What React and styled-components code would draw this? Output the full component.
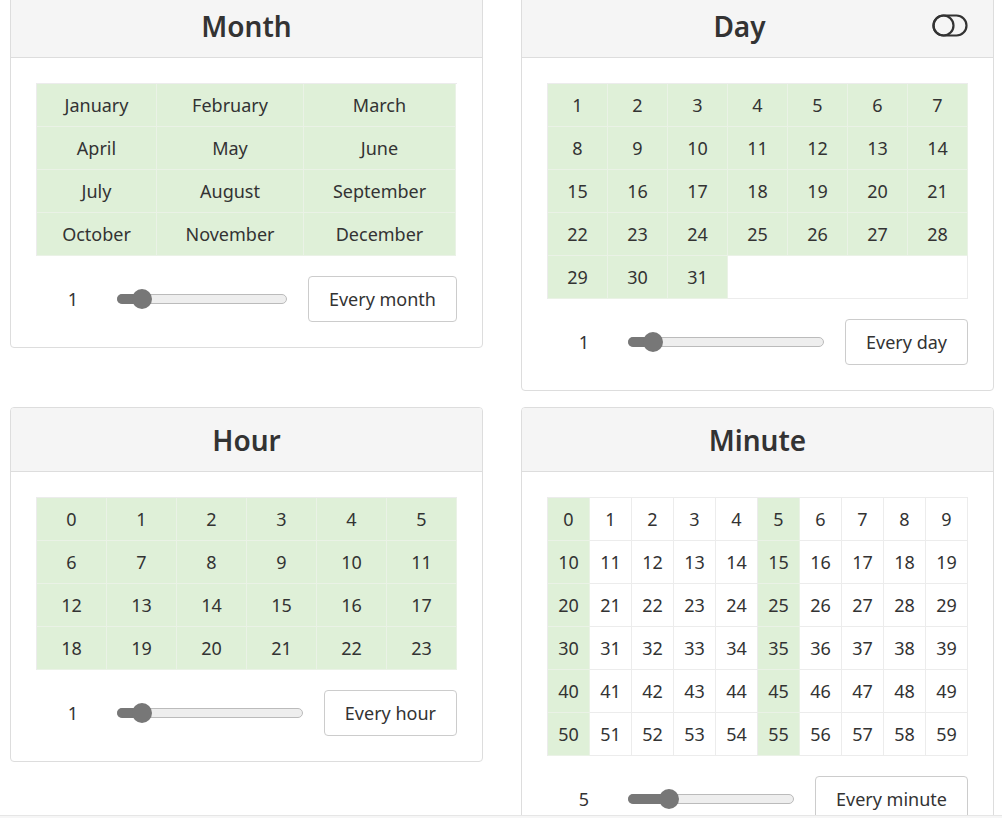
import React from "react";
import styled, { createGlobalStyle } from "styled-components";

const GlobalStyle = createGlobalStyle`
  html, body {
    margin: 0;
    padding: 0;
    background: #fff;
    overflow: hidden;
  }
  body {
    font-family: "Noto Sans", "Open Sans", sans-serif;
    color: #333;
  }
`;

const Viewport = styled.div`
  display: flex;
  flex-direction: column;
  height: 100vh;
`;

const Scroller = styled.div`
  flex: 1;
  overflow: hidden;
`;

const Board = styled.div`
  display: grid;
  grid-template-columns: 473px 473px;
  column-gap: 38px;
  row-gap: 16px;
  align-items: start;
  padding: 0 10px;
  margin-top: -7px;
`;

const StatusStrip = styled.div`
  height: 2px;
  background: #f6f6f6;
  border-top: 1px solid #e6e6e6;
`;

const Card = styled.section`
  border: 1px solid #ddd;
  border-radius: 4px;
  background: #fff;
  overflow: hidden;
`;

const CardHeader = styled.header`
  display: flex;
  align-items: center;
  height: 63px;
  padding: 0 25px;
  background: #f5f5f5;
  border-bottom: 1px solid #ddd;
`;

const Title = styled.h2`
  flex: 1;
  margin: 0;
  text-align: center;
  font-size: 28px;
  font-weight: 600;
  color: #333;
  line-height: 1;
`;

const ToggleButton = styled.span`
  display: flex;
  color: #333;
`;

const CardBody = styled.div`
  padding: 25px;
`;

const CellGrid = styled.div`
  display: grid;
  grid-template-columns: ${(p) => p.$columns};
  border-top: 1px solid #ececec;
  border-left: 1px solid #ececec;
`;

const Cell = styled.div`
  height: 42px;
  display: flex;
  align-items: center;
  justify-content: center;
  font-size: 18px;
  color: #333;
  background: ${(p) => (p.$selected ? "#dff0d8" : "#fff")};
  border-right: 1px solid ${(p) => (p.$selected ? "#eaf2e6" : "#ececec")};
  border-bottom: 1px solid ${(p) => (p.$selected ? "#eaf2e6" : "#ececec")};
`;

const Filler = styled.div`
  grid-column: ${(p) => p.$from} / -1;
  border-right: 1px solid #ececec;
  border-bottom: 1px solid #ececec;
`;

const Controls = styled.div`
  display: flex;
  align-items: center;
  margin-top: 20px;
`;

const StepValue = styled.span`
  width: 74px;
  text-align: center;
  font-size: 18px;
  color: #333;
`;

const Track = styled.div`
  position: relative;
  flex: 1;
  height: 8px;
  margin: 0 21px 0 7px;
  border: 1px solid #bbb;
  border-radius: 6px;
  background: #eee;
`;

const TrackFill = styled.div`
  position: absolute;
  left: -1px;
  top: -1px;
  bottom: -1px;
  background: #777;
  border-radius: 6px 0 0 6px;
`;

const Thumb = styled.div`
  position: absolute;
  top: 50%;
  width: 20px;
  height: 20px;
  margin: -10px 0 0 -10px;
  border-radius: 50%;
  background: #777;
`;

const EveryButton = styled.button`
  height: 46px;
  padding: 0 20px;
  border: 1px solid #ccc;
  border-radius: 4px;
  background: #fff;
  font-family: inherit;
  font-size: 18px;
  color: #333;
  cursor: pointer;
`;

const ToggleIcon = () => (
  <svg width="36" height="23" viewBox="0 0 36 23" fill="none" stroke="currentColor" strokeWidth="2.2">
    <rect x="1.5" y="1.5" width="33" height="20" rx="10" />
    <circle cx="11.5" cy="11.5" r="10" />
  </svg>
);

const range = (from, to) => Array.from({ length: to - from + 1 }, (_, i) => from + i);

const months = [
  "January", "February", "March",
  "April", "May", "June",
  "July", "August", "September",
  "October", "November", "December",
];

const panels = [
  {
    title: "Month",
    columns: "120px 147px 152px",
    cells: months.map((m) => ({ label: m, selected: true })),
    step: 1,
    button: "Every month",
  },
  {
    title: "Day",
    toggle: true,
    columns: "repeat(7, 1fr)",
    perRow: 7,
    cells: range(1, 31).map((d) => ({ label: d, selected: true })),
    step: 1,
    button: "Every day",
  },
  {
    title: "Hour",
    columns: "repeat(6, 1fr)",
    cells: range(0, 23).map((h) => ({ label: h, selected: true })),
    step: 1,
    button: "Every hour",
  },
  {
    title: "Minute",
    columns: "repeat(10, 1fr)",
    cells: range(0, 59).map((m) => ({ label: m, selected: m % 5 === 0 })),
    step: 5,
    button: "Every minute",
  },
];

const StepSlider = ({ step }) => {
  const pos = 20 + step * 4;
  return (
    <Track>
      <TrackFill style={{ width: pos + 1 }} />
      <Thumb style={{ left: pos }} />
    </Track>
  );
};

const Panel = ({ panel }) => {
  const { title, toggle, columns, perRow, cells, step, button } = panel;
  const leftover = perRow ? cells.length % perRow : 0;
  return (
    <Card>
      <CardHeader>
        <Title>{title}</Title>
        {toggle && (
          <ToggleButton>
            <ToggleIcon />
          </ToggleButton>
        )}
      </CardHeader>
      <CardBody>
        <CellGrid $columns={columns}>
          {cells.map((c) => (
            <Cell key={c.label} $selected={c.selected}>
              {c.label}
            </Cell>
          ))}
          {leftover > 0 && <Filler $from={leftover + 1} />}
        </CellGrid>
        <Controls>
          <StepValue>{step}</StepValue>
          <StepSlider step={step} />
          <EveryButton>{button}</EveryButton>
        </Controls>
      </CardBody>
    </Card>
  );
};

export default function App() {
  return (
    <Viewport>
      <GlobalStyle />
      <Scroller>
        <Board>
          {panels.map((p) => (
            <Panel key={p.title} panel={p} />
          ))}
        </Board>
      </Scroller>
      <StatusStrip />
    </Viewport>
  );
}
